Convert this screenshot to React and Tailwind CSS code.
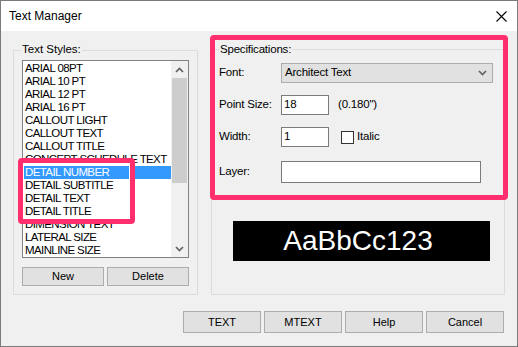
import React from "react";

const styles = [
  "ARIAL 08PT",
  "ARIAL 10 PT",
  "ARIAL 12 PT",
  "ARIAL 16 PT",
  "CALLOUT LIGHT",
  "CALLOUT TEXT",
  "CALLOUT TITLE",
  "CONCEPT SCHEDULE TEXT",
  "DETAIL NUMBER",
  "DETAIL SUBTITLE",
  "DETAIL TEXT",
  "DETAIL TITLE",
  "DIMENSION TEXT",
  "LATERAL SIZE",
  "MAINLINE SIZE",
];

function Chevron({ up }) {
  return (
    <svg width="9" height="6" viewBox="0 0 9 6">
      <polyline
        points={up ? "1,5 4.5,1.5 8,5" : "1,1 4.5,4.5 8,1"}
        fill="none"
        stroke="#606060"
        strokeWidth="1.6"
      />
    </svg>
  );
}

function Button({ children, className = "" }) {
  return (
    <button
      className={`flex items-center justify-center border border-[#adadad] bg-[#e1e1e1] text-[11px] text-black ${className}`}
    >
      {children}
    </button>
  );
}

export default function App() {
  return (
    <div
      className="relative flex h-[347px] w-[518px] flex-col border border-[#7a7a7a] bg-[#f0f0f0] text-black"
      style={{ fontFamily: '"Liberation Sans", Arial, sans-serif' }}
    >
      {/* Title bar */}
      <div className="flex h-[30px] items-center justify-between bg-white pl-[8px] pr-[10px]">
        <span className="text-[12px]">Text Manager</span>
        <svg width="11" height="11" viewBox="0 0 11 11">
          <path d="M0.5 0.5 L10.5 10.5 M10.5 0.5 L0.5 10.5" stroke="#000" strokeWidth="1.1" />
        </svg>
      </div>

      {/* Body */}
      <div className="flex flex-1 flex-col pl-[12px] pr-[12px] pt-[18px]">
        <div className="flex items-start gap-[13px]">
          {/* Text Styles group */}
          <div className="relative mt-[1px] h-[245px] w-[185px] border border-[#dcdcdc] pl-[8px] pt-[9px]">
            <span className="absolute left-[7px] top-[-8px] bg-[#f0f0f0] px-[1px] text-[11.5px] leading-[13px]">
              Text Styles:
            </span>
            <div className="flex h-[198px] w-[167px] border border-[#828282] bg-white">
              <div className="flex-1 overflow-hidden pt-px">
                {styles.map((s) => (
                  <div
                    key={s}
                    className={`h-[13px] whitespace-nowrap pl-[2px] text-[11.5px] leading-[13px] tracking-[-0.6px] ${
                      s === "DETAIL NUMBER" ? "bg-[#3399ff] text-white" : ""
                    }`}
                  >
                    {s}
                  </div>
                ))}
              </div>
              <div className="flex w-[17px] flex-col items-center bg-[#f0f0f0]">
                <div className="flex h-[17px] items-center justify-center">
                  <Chevron up />
                </div>
                <div className="h-[105px] w-[15px] bg-[#cdcdcd]" />
                <div className="flex-1" />
                <div className="flex h-[17px] items-center justify-center">
                  <Chevron />
                </div>
              </div>
            </div>
            <div className="mt-[9px] flex gap-[3px]">
              <Button className="h-[19px] w-[82px]">New</Button>
              <Button className="h-[19px] w-[82px]">Delete</Button>
            </div>
          </div>

          {/* Specifications group */}
          <div className="relative flex h-[246px] w-[294px] flex-col border border-[#dcdcdc] pl-[7px] pt-[13px] text-[11.5px] tracking-[-0.2px]">
            <span className="absolute left-[7px] top-[-7px] bg-[#f0f0f0] px-[1px] leading-[13px]">
              Specifications:
            </span>
            <div className="flex h-[20px] items-center">
              <span className="w-[62px]">Font:</span>
              <div className="flex h-[20px] w-[212px] items-center justify-between border border-[#adadad] bg-[#e1e1e1] pl-[3px] pr-[5px]">
                <span>Architect Text</span>
                <Chevron />
              </div>
            </div>
            <div className="mt-[12px] flex h-[20px] items-center">
              <span className="w-[62px]">Point Size:</span>
              <div className="h-[20px] w-[48px] border border-[#7a7a7a] bg-white pl-[2px] leading-[16px]">18</div>
              <span className="ml-[9px]">(0.180")</span>
            </div>
            <div className="mt-[12px] flex h-[20px] items-center">
              <span className="w-[62px]">Width:</span>
              <div className="h-[20px] w-[48px] border border-[#7a7a7a] bg-white pl-[2px] leading-[16px]">1</div>
              <div className="ml-[12px] h-[13px] w-[13px] border border-[#333333] bg-white" />
              <span className="ml-[3px]">Italic</span>
            </div>
            <div className="mt-[14px] flex h-[22px] items-center">
              <span className="w-[62px]">Layer:</span>
              <div className="h-[22px] w-[200px] border border-[#7a7a7a] bg-white" />
            </div>
            <div className="mt-[38px] flex h-[40px] w-[257px] items-center justify-center self-center bg-black pr-[7px] text-[28px] tracking-normal text-white">
              AaBbCc123
            </div>
          </div>
        </div>

        {/* Bottom buttons */}
        <div className="mt-[16px] flex justify-end gap-[3px] pr-[1px]">
          <Button className="h-[22px] w-[78px]">TEXT</Button>
          <Button className="h-[22px] w-[78px]">MTEXT</Button>
          <Button className="h-[22px] w-[78px]">Help</Button>
          <Button className="h-[22px] w-[78px]">Cancel</Button>
        </div>
      </div>

      {/* Annotation highlights */}
      <div className="absolute left-[17px] top-[157px] h-[66px] w-[117px] rounded-[4px] border-[5px] border-[#ff2e6c] shadow-[inset_0_0_0_1px_#fff]" />
      <div className="absolute left-[209px] top-[34px] h-[165px] w-[298px] rounded-[4px] border-[5px] border-[#ff2e6c]" />
    </div>
  );
}
